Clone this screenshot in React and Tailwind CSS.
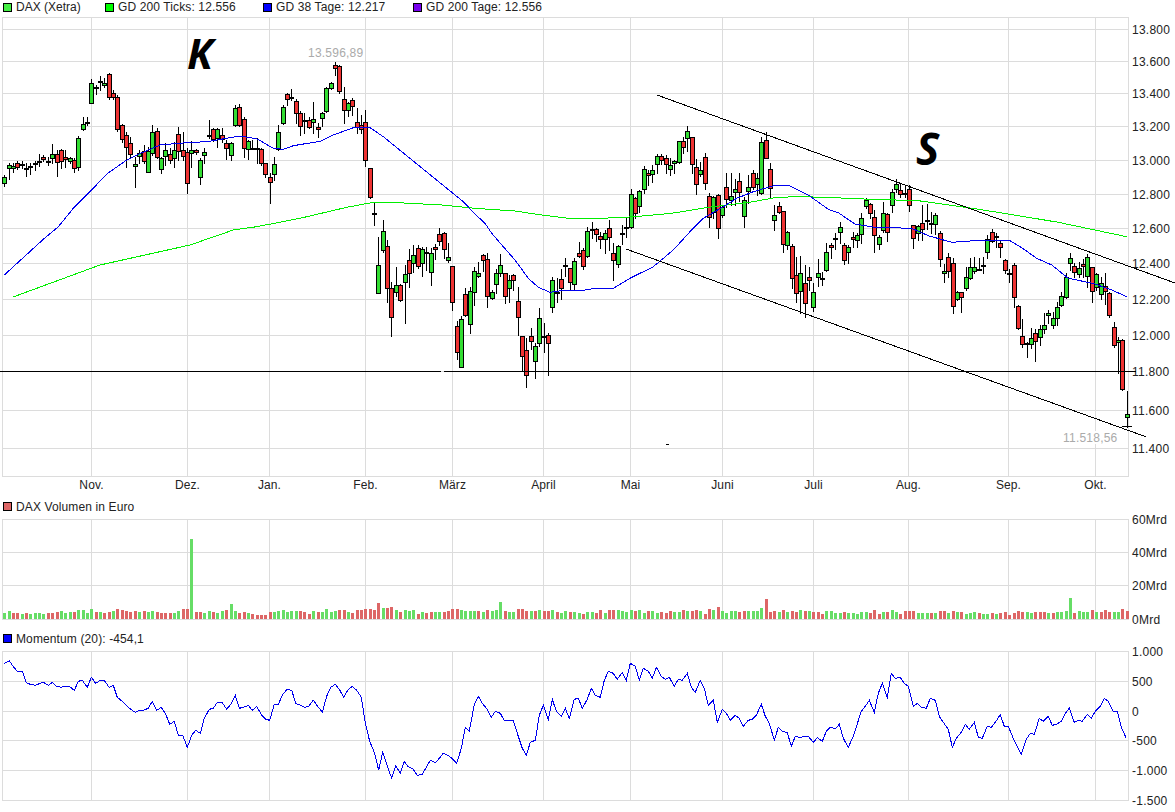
const X = (i) => 4.33 + 4.35 * i;

// candles, read as [wick top, body top, body bottom, wick bottom, colour] in zoomed pixels, y = offset + v / 3
const seg = (offset, rows) => rows.trim().split(/\s+/).map((r) => {
  const c = r[0];
  const [t, a, b, l] = r.slice(1).split(',').map((v) => offset + Number(v) / 3);
  return { c, t, a, b, l };
});

const A = seg(0, `
g525,530,550,557 g490,496,503,536 g490,497,505,515 r482,490,502,508 d482,493,493,505 d490,503,503,527 d490,497,497,522 d482,490,490,510 d463,484,484,498 r465,472,478,482
d470,483,483,495 g433,461,475,490 r450,462,487,527 r448,451,484,503 r450,472,478,500 g470,475,482,490 r475,481,505,515 g408,415,502,510 g352,373,388,390 d352,367,367,375
g238,250,310,310 d255,260,260,282 d228,244,244,270 g235,248,255,262 r220,223,292,296 r270,280,290,296 r285,292,388,392 r372,376,418,425 r395,406,442,502 r410,430,463,475
g470,492,499,560 g450,458,469,490 r436,454,484,490 g440,452,515,517 g375,397,460,465 r385,394,472,475 g470,475,508,520 g430,451,469,495 r445,463,481,490 g425,451,475,502
r382,403,452,480 r395,451,469,480 r445,457,550,578 g422,451,460,500 r448,451,457,462 g475,481,532,552 g445,457,466,488 d360,405,405,415 r385,388,418,422 g385,388,415,440
r385,406,418,425 r420,428,445,478 g425,430,466,480 g315,325,376,378 r312,322,375,378 r352,358,445,470 g420,424,448,476 d420,443,443,448 d415,445,445,488 r445,448,490,495
r488,490,523,530 r520,532,547,610 g470,492,523,540 g375,397,448,450 g315,322,370,372 r278,283,298,315 d268,292,292,300 r296,304,340,368 r332,340,379,404 d340,360,360,400
r350,359,380,385 g305,358,367,398 r368,380,388,412 g335,340,355,378 g262,265,332,335 g245,250,265,268 r185,196,205,225 r195,197,274,278 r260,296,331,370 g305,310,331,348
r295,301,319,345 r325,367,382,398 r345,376,386,400 r330,365,480,497 r503,505,590,593 d607,640,640,676`);

const B = seg(190, `
g140,226,310,310 g90,122,180,185 r150,167,295,335 r275,295,380,437 g232,284,306,318 r282,284,331,332 g225,253,277,398 r178,209,250,290 g165,194,218,245 r165,173,229,235
g170,176,220,258 g170,185,188,240 g175,190,245,285 r162,172,178,207 r115,133,154,165 r126,130,176,205 g160,202,209,215 r228,229,335,360 r393,409,485,506 g377,388,530,530
r295,313,376,378 g290,304,403,428 g232,244,307,345 g215,250,259,262 r192,194,211,243 r190,208,317,350 g300,307,323,328 g237,250,283,310 g193,226,250,258 r250,250,319,338
g255,271,295,335 r252,256,271,300 r292,334,382,435 r437,439,499,540 r445,481,556,590 r415,439,454,478 g458,469,512,565 g355,385,460,468 d400,438,438,485 r430,436,460,555
g262,271,352,365 d265,305,305,335 r238,268,295,326 d205,224,224,258 r235,235,277,300 g205,214,283,298 r155,190,199,200 r175,181,227,238 g110,124,199,200 d95,118,118,143
r115,118,133,152 r125,139,148,175 g120,130,148,190 r90,115,142,180 r160,190,211,270 g165,169,223,230`);

const C = seg(90, `
d405,428,428,462 d385,410,410,440 g298,313,412,414 r320,325,370,385 g300,304,347,365 g228,238,298,308 r240,250,256,285 g225,241,253,275 g192,199,223,250 r192,199,211,222
r195,205,223,250 g205,226,238,255 g210,214,220,250 g152,154,217,220 r140,154,172,190 g108,124,145,182 r140,142,223,250 r208,232,283,313 g215,241,253,258 r190,202,280,298
r310,319,382,412 g318,322,367,385 r312,316,415,445 g345,352,376,380 r250,292,328,352 g250,319,331,345 g268,298,307,345 r250,274,307,332 g320,331,379,412 g255,292,304,340
r240,250,292,298 g250,265,283,315 g140,157,310,313 r125,151,205,205 r220,238,295,322 g345,376,391,420 r335,349,367,370 r362,364,463,485 g424,427,466,478 r462,469,565,595
r500,556,610,635 g498,550,604,668 r525,580,640,680 r530,562,571,600 g580,607,652,664 g508,550,562,588 d545,564,564,585 g460,487,541,543 r460,466,472,505 d430,445,445,476
g395,412,427,460 r460,466,511,522 g465,472,487,518 r425,442,448,472 g428,436,451,470 g370,385,433,458 g325,331,349,355 r340,343,370,385 r360,382,436,485 g436,442,463,478
g337,370,421,425 r370,373,427,452 g298,307,346,365 g268,283,298,305 r283,301,313,320 d285,310,310,320 r285,298,346,362 r404,406,445,473 g405,409,430,450 r345,400,418,450
d343,390,390,417 d365,400,400,430 g368,376,403,432`);

const D = seg(170, `
r183,190,268,288 g283,304,310,335 r250,260,303,320 r265,280,408,430 g362,367,387,390 r365,367,382,425 g290,320,355,360 g265,290,325,327 g262,290,303,310 d265,298,298,300
d260,284,284,310 g195,208,247,265 r178,187,214,215 d190,199,199,230 r210,220,232,260 r268,271,301,310 d298,310,310,335 r280,286,382,410 r405,409,475,478 r448,499,523,530
d515,520,520,560 g475,505,523,535 r478,490,514,572 g465,478,502,525 g428,466,478,490 g420,430,436,460 g425,445,466,475 g395,412,445,465 g365,379,406,408 g308,322,382,384
g250,265,280,300 r280,289,307,320 g275,295,313,322 r268,283,289,320 g252,262,319,350 r290,292,364,395 g310,313,352,360 g322,340,373,388 r310,349,364,402 r365,370,436,442
r457,472,526,532 g500,511,517,608 r508,511,658,660 g662,733,742,770`);

const candles = [...A, ...B, ...C, ...D];

const vols = `g369 g363 r369 r369 g372 r369 g372 g369 g369 g372 r369 r369 r366 g363 g369 g366 r366 g360 g360 g369
g357 r366 g366 r369 r366 g363 r357 r360 r363 r366 r363 g366 r363 g366 g363 r366 r369 r369 r369 g369
g363 r357 r357 g147 r366 r366 g369 g363 r366 g369 g363 r360 g342 g363 r369 r366 g369 r372 r375 r375
r375 r366 g366 g363 g360 g366 g363 g363 r363 r366 r372 g363 r366 g366 g357 g366 g363 r360 r360 g366
r369 r360 r360 r357 r357 r360 r339 g354 r354 r351 g360 r366 g360 g363 g360 r372 g366 r369 r366 g366
g366 r366 r363 r357 r357 g360 g363 g363 g363 r363 g366 r360 g363 g360 g336 r363 g366 g366 r357 r357
r363 g363 r363 g360 r363 r363 g360 r366 g369 g363 r366 g366 g369 r372 g366 g366 r369 r360 g369 r360
r360 g360 g363 g366 g360 r363 g360 g369 r363 g363 g369 r366 r369 r363 g366 g366 r360 g363 r363 r360
g363 r372 r357 g360 r351 g363 g369 g363 g363 r366 r363 g363 g363 g363 g354 r327 r366 r363 g366 r360
g366 r363 r366 g360 r363 g363 r366 r366 r372 g363 g363 g369 g369 r366 g369 g369 g372 g366 g366 r369
r360 r372 g366 r366 g360 g366 r372 r363 r363 r363 g369 g369 g369 r369 g369 r363 r363 g369 r363 g366
r366 g372 g369 g366 r369 g372 g372 r369 g372 r369 r366 r375 r369 r363 r366 g366 g369 r366 r366 r366
g369 r369 g366 g366 g363 g324 r369 g363 g366 g366 r360 g366 r366 r360 r366 g366 g366 r357 r363`
  .trim().split(/\s+/).map((s) => ({ c: s[0], top: 490 + Number(s.slice(1)) / 3 }));

const pts = (ox, oy, s) => s.trim().split(/\s+/).map((p) => {
  const [x, y] = p.split(',').map(Number);
  return `${(ox + x / 3).toFixed(1)},${(oy + y / 3).toFixed(1)}`;
});

const gd38 = [
  '4.3,275',
  ...pts(0, 0, `130,718 175,680 220,625 270,575 320,522 380,480 410,465 480,435 560,428 620,425 680,415 720,408 770,416 820,445 850,448 880,437 960,424 1000,405 1060,383 1110,383 1150,410`),
  ...pts(375, 190, `265,35 300,72 330,100 350,130 385,170 420,210 460,265 490,292 525,307 560,302 630,300 655,296 715,295 765,265`),
  ...pts(620, 90, `100,530 160,480 210,425 250,385 310,350 350,325 400,305 440,293 470,285`),
  ...pts(775, 170, `40,46 100,75 160,118 190,128 240,162 300,172 410,175 460,197 530,217 600,212 705,212 740,233 785,265 830,285 880,325 930,335 960,342 1010,360 1055,380`),
].join(' ');

const gd200 = [
  '13,297', '100,265', '190,245',
  ...pts(0, 0, `700,690 770,680 900,655 1040,622 1120,607`),
  ...pts(375, 190, `70,38 200,45 300,55 420,63 500,75 580,85 680,85 780,80 890,70 1000,52`),
  ...pts(620, 90, `400,335 470,322 540,320 660,323`),
  ...pts(775, 170, `200,85 430,92 580,113 700,132 850,157 1055,200`),
].join(' ');

const momentum = [
  ...pts(0, 490, `13,520 28,512 40,530 52,544 67,544 79,578 91,583 106,586 118,581 130,577 145,586 157,577 169,589 184,592 196,589 208,589 223,601 235,574 247,571 262,592 274,562 287,580 301,571 313,571 327,592 340,586 352,622 367,634 379,646 392,658 406,667 418,661 430,661 445,655 457,634 470,661 484,652 496,670 509,703 523,694 535,736 548,736 562,772 575,736 587,721 601,730 613,685 628,658 640,655 652,637 666,637 680,658 692,643 706,616 718,655 731,652 745,646 757,661 770,649 785,676 797,688 809,691 823,643 835,643 848,613 862,598 875,601 887,640 901,646 914,652 926,649 940,631 953,649 967,667 980,619 992,592 1006,583 1018,598 1031,622 1045,598 1057,589 1070,601 1084,622 1096,700 1109,754 1123,787 1136,841 1148,787 1161,826`),
  ...pts(390, 490, `5,865 17,827 31,850 43,815 55,830 70,838 82,856 97,853 109,832 121,811 136,818 148,805 160,790 175,797 187,806 200,820 214,775 226,712 238,724 253,643 265,619 277,640 292,658 304,682 316,664 331,670 343,692 355,692 370,691 382,730 397,775 409,796 421,757 436,751 448,676 460,646 475,688 487,628 499,664 514,679 526,655 538,685 553,628 565,625 577,655 592,628 604,595 616,616 631,622 643,571 655,544 670,550 682,568 697,547 709,571 721,520 736,529 748,571 760,535 775,544 787,565 799,532 814,559 826,568 838,562 853,589 865,568 877,571 892,550 904,592 916,607 931,571 943,595 955,646 970,631 982,697 997,658 1009,670 1021,691 1036,676 1048,685 1060,709 1075,691 1087,688 1099,676 1114,643 1126,679 1138,700 1153,751 1165,712`),
  ...pts(775, 490, `10,712 22,724 37,728 49,769 61,739 76,743 88,739 100,739 115,757 127,743 142,754 154,724 166,712 181,716 193,703 205,745 220,772 235,739 259,664 271,649 283,631 298,667 310,610 322,580 337,622 349,550 361,565 376,562 388,580 400,589 415,649 427,640 439,652 454,655 466,625 481,631 493,679 505,697 520,718 532,772 544,745 559,727 571,703 583,718 598,697 610,742 622,745 637,709 649,712 661,697 676,674 688,709 700,709 715,745 727,769 739,793 754,748 766,730 778,733 793,685 805,694 820,679 832,706 844,703 859,694 871,670 883,655 898,697 910,691 922,694 937,673 949,685 961,664 976,649 988,625 1000,634 1015,664 1027,664 1039,712 1054,745`),
].join(' ');

const months = [['Nov.', 91.5], ['Dez.', 187.5], ['Jan.', 269.5], ['Feb.', 365.5], ['März', 452.5], ['April', 543.5], ['Mai', 630.5], ['Juni', 722.5], ['Juli', 813.5], ['Aug.', 908.5], ['Sep.', 1008.5], ['Okt.', 1095.5]];
const vGrid = months.map((m) => m[1]);
const L = 2.5;
const R = 1128.5;

const mainGrid = [['13.800', 29.5], ['13.600', 61.5], ['13.400', 93.5], ['13.200', 126.5], ['13.000', 160.5], ['12.800', 194.5], ['12.600', 228.5], ['12.400', 263.5], ['12.200', 299.5], ['12.000', 335.5], ['11.800', 371.5], ['11.600', 410.5], ['11.400', 448.5]];
const volGrid = [['60Mrd', 519.5], ['40Mrd', 552.5], ['20Mrd', 585.5], ['0Mrd', 619.5]];
const momGrid = [['1.000', 651.5], ['500', 681.5], ['0', 711.5], ['-500', 740.5], ['-1.000', 770.5], ['-1.500', 800.5]];

function Grid({ rows, top, bottom }) {
  return (
    <g className="stroke-[#dcdcdc]" shapeRendering="crispEdges" strokeWidth="1">
      <rect x={L} y={top} width={R - L} height={bottom - top} fill="none" />
      {rows.map(([label, y]) => <line key={label} x1={L} x2={R} y1={y} y2={y} />)}
      {vGrid.map((x) => <line key={x} x1={x} x2={x} y1={top} y2={bottom} />)}
    </g>
  );
}

function Labels({ rows }) {
  return rows.map(([label, y]) => (
    <text key={label} x="1132" y={y + 4} className="fill-[#222222] text-[12px] tracking-[0.25px]">{label}</text>
  ));
}

function Candle({ i, d }) {
  const px = Math.round(X(i));
  const w = px + 0.5;
  const t = Math.round(d.t);
  const l = Math.round(d.l);
  const a = Math.round(d.a);
  const b = Math.round(d.b);
  return (
    <g>
      <line x1={w} x2={w} y1={t} y2={l + 1} stroke="#000" />
      {d.c === 'd' ? (
        <rect x={px - 2} y={a} width="5" height="2" fill="#000" />
      ) : (
        <rect
          x={px - 1.5}
          y={a + 0.5}
          width="4"
          height={Math.max(1, b - a)}
          stroke="#000"
          className={d.c === 'g' ? 'fill-[#33dd33]' : 'fill-[#ee3333]'}
        />
      )}
    </g>
  );
}

function Legend({ swatch, text = 'tracking-[0.12px]', children }) {
  return (
    <span className="flex items-center gap-[4px] h-[13px]">
      <span className={`block w-[9px] h-[9px] border border-black ${swatch}`} />
      <span className={`text-[12px] leading-[13px] text-[#222222] whitespace-nowrap ${text}`}>{children}</span>
    </span>
  );
}

export default function App() {
  return (
    <div className="w-[1175px] h-[812px] bg-white overflow-hidden flex flex-col font-['Liberation_Sans',sans-serif]">
      <div className="h-[17px] pl-[3px] pt-[1px] flex items-start">
        <span className="w-[102px]"><Legend swatch="bg-[#44ee44]" text="tracking-normal">DAX (Xetra)</Legend></span>
        <span className="w-[158px]"><Legend swatch="bg-[#00ff00]">GD 200 Ticks: 12.556</Legend></span>
        <span className="w-[150px]"><Legend swatch="bg-[#0000ff]">GD 38 Tage: 12.217</Legend></span>
        <Legend swatch="bg-[#7700ee]">GD 200 Tage: 12.556</Legend>
      </div>

      <svg className="block w-[1175px] h-[481px] shrink-0 overflow-visible" viewBox="0 17 1175 481">
        <Grid rows={mainGrid} top={17.5} bottom={476.5} />
        <Labels rows={mainGrid} />
        {months.map(([m, x]) => (
          <text key={m} x={x} y="489" textAnchor="middle" className="fill-[#222222] text-[12px] tracking-[0.12px]">{m}</text>
        ))}

        <rect x="307" y="46" width="57" height="13" fill="#fff" />
        <rect x="1062" y="431" width="57" height="13" fill="#fff" />
        <text x="308" y="57" className="fill-[#aaaaaa] text-[12px] tracking-[0.22px]">13.596,89</text>
        <text x="1063" y="442" className="fill-[#aaaaaa] text-[12px] tracking-[0.22px]">11.518,56</text>

        <g shapeRendering="crispEdges">
          {candles.map((d, i) => <Candle key={i} i={i} d={d} />)}
          <line x1="1122" x2="1132" y1="426.5" y2="426.5" stroke="#000" />
          <line x1="0" x2="441" y1="371.5" y2="371.5" stroke="#000" />
          <line x1="444" x2="1136" y1="371.5" y2="371.5" stroke="#000" />
          <line x1="666" x2="669" y1="444.5" y2="444.5" stroke="#000" />
          <polyline points={gd200} fill="none" stroke="#00ee00" strokeWidth="1" />
          <polyline points={gd38} fill="none" stroke="#0000ee" strokeWidth="1" />
          <line x1="657" y1="95" x2="1175" y2="283" stroke="#000" strokeWidth="1" />
          <line x1="626" y1="249" x2="1145.7" y2="436.7" stroke="#000" strokeWidth="1" />
        </g>

        <text x="187" y="69" className="font-['Open_Sans',sans-serif] italic font-bold text-[42px] fill-black">K</text>
        <text x="916" y="165" className="font-['Open_Sans',sans-serif] italic font-bold text-[44px] fill-black">S</text>
      </svg>

      <div className="h-[17px] pl-[3px] pt-[2px] flex items-start">
        <Legend swatch="bg-[#dd6666]" text="tracking-[0.12px] translate-y-px">DAX Volumen in Euro</Legend>
      </div>

      <svg className="block w-[1175px] h-[115px] shrink-0 overflow-visible" viewBox="0 515 1175 115">
        <Grid rows={volGrid} top={519.5} bottom={619.5} />
        <Labels rows={volGrid} />
        <g shapeRendering="crispEdges">
          {vols.map((v, i) => (
            <rect
              key={i}
              x={Math.round(X(i)) - 1}
              y={Math.round(v.top)}
              width="3"
              height={619 - Math.round(v.top)}
              className={v.c === 'g' ? 'fill-[#66dd66]' : 'fill-[#dd6666]'}
            />
          ))}
        </g>
      </svg>

      <div className="h-[17px] pl-[3px] pt-[2px] flex items-start">
        <Legend swatch="bg-[#0000ff]" text="tracking-[0.12px] translate-y-px">Momentum (20): -454,1</Legend>
      </div>

      <svg className="block w-[1175px] h-[165px] shrink-0 overflow-visible" viewBox="0 647 1175 165">
        <Grid rows={momGrid} top={651.5} bottom={800.5} />
        <Labels rows={momGrid} />
        <polyline points={momentum} fill="none" stroke="#0000ee" strokeWidth="1" shapeRendering="crispEdges" />
      </svg>
    </div>
  );
}
